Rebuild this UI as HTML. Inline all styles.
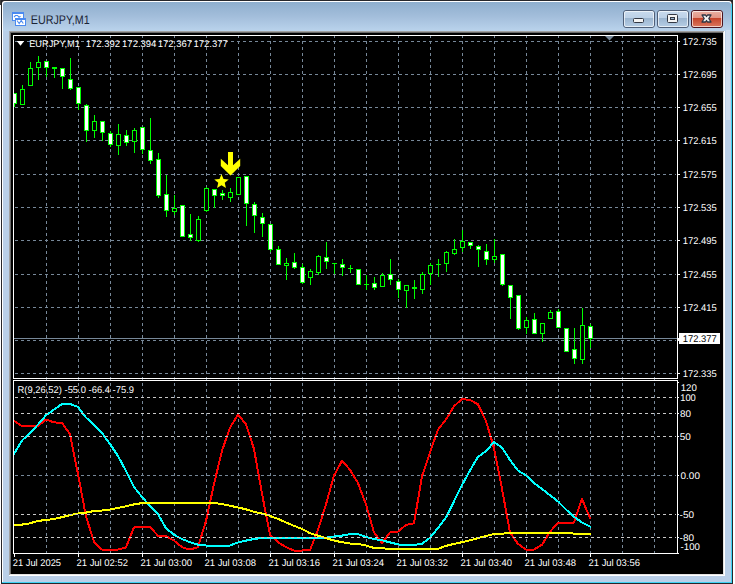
<!DOCTYPE html><html><head><meta charset="utf-8"><style>html,body{margin:0;padding:0;width:735px;height:584px;overflow:hidden;background:#fff}</style></head><body><svg width="735" height="584" viewBox="0 0 735 584" shape-rendering="crispEdges" style="display:block">
<defs><linearGradient id="tb" x1="0" y1="0" x2="0" y2="1"><stop offset="0" stop-color="#8eaecd"/><stop offset="0.5" stop-color="#a3bedb"/><stop offset="1" stop-color="#bad3ec"/></linearGradient><linearGradient id="btn" x1="0" y1="0" x2="0" y2="1"><stop offset="0" stop-color="#c9dbee"/><stop offset="0.44" stop-color="#bcd1e7"/><stop offset="0.45" stop-color="#9bb5d0"/><stop offset="1" stop-color="#b8cfe6"/></linearGradient><linearGradient id="cls" x1="0" y1="0" x2="0" y2="1"><stop offset="0" stop-color="#eab3a6"/><stop offset="0.44" stop-color="#e39484"/><stop offset="0.45" stop-color="#c5432a"/><stop offset="1" stop-color="#dc7a62"/></linearGradient><clipPath id="main"><rect x="14" y="36" width="663" height="342"/></clipPath><clipPath id="ind"><rect x="14" y="381" width="663" height="172"/></clipPath></defs>
<rect x="0" y="0" width="735" height="584" fill="#ffffff"/>
<rect x="0" y="0" width="6" height="5" fill="#3a3a3a"/>
<rect x="727" y="0" width="6" height="5" fill="#3a3a3a"/>
<rect x="1" y="0" width="732" height="584" fill="#26262a"/>
<rect x="2" y="1" width="729.5" height="583" rx="2.5" ry="2.5" fill="#ffffff" shape-rendering="auto"/>
<path d="M731,5 L732,5 L732,583 L2,583 L2,582 L731,582 Z" fill="#3ed2f4"/>
<rect x="731" y="4" width="1" height="579" fill="#3ed2f4"/>
<rect x="2" y="582" width="730" height="1" fill="#3ed2f4"/>
<rect x="1" y="583" width="732" height="1" fill="#26262a"/>
<rect x="732" y="3" width="1" height="581" fill="#26262a"/>
<rect x="3" y="2" width="728" height="580" rx="2.5" ry="2.5" fill="#b9cfe8" shape-rendering="auto"/>
<rect x="3" y="10" width="728" height="572" fill="#b9cfe8"/>
<path d="M3,5.5 Q3,2 6.5,2 L727.5,2 Q731,2 731,5.5 L731,31 L3,31 Z" fill="url(#tb)" shape-rendering="auto"/>
<rect x="726" y="30" width="4" height="90" fill="#dfeaf6" opacity="0.5"/>
<rect x="9" y="31" width="716" height="545" fill="#ffffff"/>
<rect x="9" y="31" width="715" height="544" fill="#a0a0a0"/>
<rect x="10" y="32" width="714" height="543" fill="#e3e3e3"/>
<rect x="10" y="32" width="713" height="542" fill="#696969"/>
<rect x="11" y="33" width="712" height="541" fill="#000000"/>
<g>
<rect x="12" y="12" width="12" height="9" fill="#4a8af0"/>
<rect x="13" y="14" width="10" height="6" fill="#ffffff"/>
<rect x="15" y="18" width="11" height="8" fill="#4a8af0"/>
<rect x="16" y="20" width="9" height="5" fill="#ffffff"/>
<polyline points="14,17 15.5,15.5 17.5,15.5 19,17.2 20.5,16.2" fill="none" stroke="#4a8af0" stroke-width="1.1" shape-rendering="auto"/>
<polyline points="17,20.5 19.2,23.5 21.2,20.5 23.3,23.5" fill="none" stroke="#4a8af0" stroke-width="1.1" shape-rendering="auto"/>
</g>
<text x="30.8" y="24" font-family="Liberation Sans" font-size="12.5" fill="#1b2436" textLength="58.8" lengthAdjust="spacingAndGlyphs" text-rendering="geometricPrecision" shape-rendering="auto">EURJPY,M1</text>
<rect x="623.5" y="10.5" width="31" height="17" rx="2.5" ry="2.5" fill="url(#btn)" stroke="#4f5f78" stroke-width="1" shape-rendering="auto"/>
<rect x="624.5" y="11.5" width="29" height="15" rx="1.5" ry="1.5" fill="none" stroke="#ffffff" stroke-opacity="0.65" stroke-width="1" shape-rendering="auto"/>
<rect x="657.5" y="10.5" width="31" height="17" rx="2.5" ry="2.5" fill="url(#btn)" stroke="#4f5f78" stroke-width="1" shape-rendering="auto"/>
<rect x="658.5" y="11.5" width="29" height="15" rx="1.5" ry="1.5" fill="none" stroke="#ffffff" stroke-opacity="0.65" stroke-width="1" shape-rendering="auto"/>
<rect x="691.5" y="10.5" width="31" height="17" rx="2.5" ry="2.5" fill="url(#cls)" stroke="#4a1420" stroke-width="1" shape-rendering="auto"/>
<rect x="692.5" y="11.5" width="29" height="15" rx="1.5" ry="1.5" fill="none" stroke="#ffffff" stroke-opacity="0.65" stroke-width="1" shape-rendering="auto"/>
<rect x="633.5" y="18.5" width="10" height="4" rx="1" fill="#f4f4f4" stroke="#333844" stroke-width="1" shape-rendering="auto"/>
<rect x="667.5" y="14.5" width="10" height="8" rx="1" fill="#f4f4f4" stroke="#333844" stroke-width="1" shape-rendering="auto"/>
<rect x="670.5" y="17.5" width="4" height="2" fill="#9cb6d0" stroke="#333844" stroke-width="1" shape-rendering="auto"/>
<polygon points="702,15 705.5,15 706.5,16.5 707.5,15 711,15 708.8,18.5 711,22 707.5,22 706.5,20.5 705.5,22 702,22 704.2,18.5" fill="#f2f2f2" stroke="#2e3644" stroke-width="1.3" stroke-linejoin="round" shape-rendering="auto"/>
<line x1="46.5" y1="35" x2="46.5" y2="553" stroke="#778899" stroke-width="1" stroke-dasharray="3 3"/>
<line x1="78.5" y1="35" x2="78.5" y2="553" stroke="#778899" stroke-width="1" stroke-dasharray="3 3"/>
<line x1="110.5" y1="35" x2="110.5" y2="553" stroke="#778899" stroke-width="1" stroke-dasharray="3 3"/>
<line x1="142.5" y1="35" x2="142.5" y2="553" stroke="#778899" stroke-width="1" stroke-dasharray="3 3"/>
<line x1="174.5" y1="35" x2="174.5" y2="553" stroke="#778899" stroke-width="1" stroke-dasharray="3 3"/>
<line x1="206.5" y1="35" x2="206.5" y2="553" stroke="#778899" stroke-width="1" stroke-dasharray="3 3"/>
<line x1="238.5" y1="35" x2="238.5" y2="553" stroke="#778899" stroke-width="1" stroke-dasharray="3 3"/>
<line x1="270.5" y1="35" x2="270.5" y2="553" stroke="#778899" stroke-width="1" stroke-dasharray="3 3"/>
<line x1="302.5" y1="35" x2="302.5" y2="553" stroke="#778899" stroke-width="1" stroke-dasharray="3 3"/>
<line x1="334.5" y1="35" x2="334.5" y2="553" stroke="#778899" stroke-width="1" stroke-dasharray="3 3"/>
<line x1="366.5" y1="35" x2="366.5" y2="553" stroke="#778899" stroke-width="1" stroke-dasharray="3 3"/>
<line x1="398.5" y1="35" x2="398.5" y2="553" stroke="#778899" stroke-width="1" stroke-dasharray="3 3"/>
<line x1="430.5" y1="35" x2="430.5" y2="553" stroke="#778899" stroke-width="1" stroke-dasharray="3 3"/>
<line x1="462.5" y1="35" x2="462.5" y2="553" stroke="#778899" stroke-width="1" stroke-dasharray="3 3"/>
<line x1="494.5" y1="35" x2="494.5" y2="553" stroke="#778899" stroke-width="1" stroke-dasharray="3 3"/>
<line x1="526.5" y1="35" x2="526.5" y2="553" stroke="#778899" stroke-width="1" stroke-dasharray="3 3"/>
<line x1="558.5" y1="35" x2="558.5" y2="553" stroke="#778899" stroke-width="1" stroke-dasharray="3 3"/>
<line x1="590.5" y1="35" x2="590.5" y2="553" stroke="#778899" stroke-width="1" stroke-dasharray="3 3"/>
<line x1="622.5" y1="35" x2="622.5" y2="553" stroke="#778899" stroke-width="1" stroke-dasharray="3 3"/>
<line x1="654.5" y1="35" x2="654.5" y2="553" stroke="#778899" stroke-width="1" stroke-dasharray="3 3"/>
<line x1="15" y1="41.5" x2="676" y2="41.5" stroke="#778899" stroke-width="1" stroke-dasharray="3 3"/>
<line x1="15" y1="74.5" x2="676" y2="74.5" stroke="#778899" stroke-width="1" stroke-dasharray="3 3"/>
<line x1="15" y1="107.5" x2="676" y2="107.5" stroke="#778899" stroke-width="1" stroke-dasharray="3 3"/>
<line x1="15" y1="140.5" x2="676" y2="140.5" stroke="#778899" stroke-width="1" stroke-dasharray="3 3"/>
<line x1="15" y1="174.5" x2="676" y2="174.5" stroke="#778899" stroke-width="1" stroke-dasharray="3 3"/>
<line x1="15" y1="207.5" x2="676" y2="207.5" stroke="#778899" stroke-width="1" stroke-dasharray="3 3"/>
<line x1="15" y1="240.5" x2="676" y2="240.5" stroke="#778899" stroke-width="1" stroke-dasharray="3 3"/>
<line x1="15" y1="274.5" x2="676" y2="274.5" stroke="#778899" stroke-width="1" stroke-dasharray="3 3"/>
<line x1="15" y1="307.5" x2="676" y2="307.5" stroke="#778899" stroke-width="1" stroke-dasharray="3 3"/>
<line x1="15" y1="340.5" x2="676" y2="340.5" stroke="#778899" stroke-width="1" stroke-dasharray="3 3"/>
<line x1="15" y1="373.5" x2="676" y2="373.5" stroke="#778899" stroke-width="1" stroke-dasharray="3 3"/>
<line x1="15" y1="475.5" x2="676" y2="475.5" stroke="#778899" stroke-width="1" stroke-dasharray="3 3"/>
<rect x="13" y="35" width="665" height="1" fill="#ffffff"/>
<rect x="13" y="35" width="1" height="344" fill="#ffffff"/>
<rect x="677" y="35" width="1" height="344" fill="#ffffff"/>
<rect x="13" y="378" width="665" height="1" fill="#ffffff"/>
<rect x="13" y="380" width="665" height="1" fill="#ffffff"/>
<rect x="13" y="380" width="1" height="174" fill="#ffffff"/>
<rect x="677" y="380" width="1" height="174" fill="#ffffff"/>
<rect x="13" y="553" width="665" height="1" fill="#ffffff"/>
<rect x="14" y="338" width="663" height="1" fill="#778899"/>
<polygon points="605,36 614,36 609.5,40.5" fill="#778899" shape-rendering="auto"/>
<g clip-path="url(#main)">
<rect x="14" y="93" width="1" height="14" fill="#00ff00"/>
<rect x="12" y="93" width="5" height="11" fill="#00ff00"/>
<rect x="13" y="94" width="3" height="9" fill="#ffffff"/>
<rect x="22" y="85" width="1" height="20" fill="#00ff00"/>
<rect x="20" y="89" width="5" height="16" fill="#00ff00"/>
<rect x="21" y="90" width="3" height="14" fill="#000000"/>
<rect x="30" y="62" width="1" height="24" fill="#00ff00"/>
<rect x="28" y="68" width="5" height="18" fill="#00ff00"/>
<rect x="29" y="69" width="3" height="16" fill="#000000"/>
<rect x="38" y="56" width="1" height="24" fill="#00ff00"/>
<rect x="36" y="62" width="5" height="6" fill="#00ff00"/>
<rect x="37" y="63" width="3" height="4" fill="#000000"/>
<rect x="46" y="61" width="1" height="16" fill="#00ff00"/>
<rect x="44" y="61" width="5" height="7" fill="#00ff00"/>
<rect x="45" y="62" width="3" height="5" fill="#ffffff"/>
<rect x="54" y="67" width="1" height="11" fill="#00ff00"/>
<rect x="52" y="67" width="5" height="2" fill="#00ff00"/>
<rect x="62" y="68" width="1" height="21" fill="#00ff00"/>
<rect x="60" y="68" width="5" height="9" fill="#00ff00"/>
<rect x="61" y="69" width="3" height="7" fill="#ffffff"/>
<rect x="70" y="58" width="1" height="32" fill="#00ff00"/>
<rect x="68" y="79" width="5" height="10" fill="#00ff00"/>
<rect x="69" y="80" width="3" height="8" fill="#ffffff"/>
<rect x="78" y="87" width="1" height="23" fill="#00ff00"/>
<rect x="76" y="87" width="5" height="17" fill="#00ff00"/>
<rect x="77" y="88" width="3" height="15" fill="#ffffff"/>
<rect x="86" y="104" width="1" height="38" fill="#00ff00"/>
<rect x="84" y="105" width="5" height="26" fill="#00ff00"/>
<rect x="85" y="106" width="3" height="24" fill="#ffffff"/>
<rect x="94" y="115" width="1" height="23" fill="#00ff00"/>
<rect x="92" y="121" width="5" height="10" fill="#00ff00"/>
<rect x="93" y="122" width="3" height="8" fill="#000000"/>
<rect x="102" y="121" width="1" height="20" fill="#00ff00"/>
<rect x="100" y="121" width="5" height="12" fill="#00ff00"/>
<rect x="101" y="122" width="3" height="10" fill="#ffffff"/>
<rect x="110" y="131" width="1" height="16" fill="#00ff00"/>
<rect x="108" y="133" width="5" height="12" fill="#00ff00"/>
<rect x="109" y="134" width="3" height="10" fill="#ffffff"/>
<rect x="118" y="124" width="1" height="31" fill="#00ff00"/>
<rect x="116" y="134" width="5" height="12" fill="#00ff00"/>
<rect x="117" y="135" width="3" height="10" fill="#000000"/>
<rect x="126" y="130" width="1" height="16" fill="#00ff00"/>
<rect x="124" y="135" width="5" height="8" fill="#00ff00"/>
<rect x="125" y="136" width="3" height="6" fill="#ffffff"/>
<rect x="134" y="128" width="1" height="25" fill="#00ff00"/>
<rect x="132" y="130" width="5" height="12" fill="#00ff00"/>
<rect x="133" y="131" width="3" height="10" fill="#000000"/>
<rect x="142" y="127" width="1" height="27" fill="#00ff00"/>
<rect x="140" y="127" width="5" height="23" fill="#00ff00"/>
<rect x="141" y="128" width="3" height="21" fill="#ffffff"/>
<rect x="150" y="118" width="1" height="46" fill="#00ff00"/>
<rect x="148" y="150" width="5" height="11" fill="#00ff00"/>
<rect x="149" y="151" width="3" height="9" fill="#ffffff"/>
<rect x="158" y="153" width="1" height="45" fill="#00ff00"/>
<rect x="156" y="159" width="5" height="37" fill="#00ff00"/>
<rect x="157" y="160" width="3" height="35" fill="#ffffff"/>
<rect x="166" y="175" width="1" height="42" fill="#00ff00"/>
<rect x="164" y="194" width="5" height="17" fill="#00ff00"/>
<rect x="165" y="195" width="3" height="15" fill="#ffffff"/>
<rect x="174" y="195" width="1" height="20" fill="#00ff00"/>
<rect x="172" y="208" width="5" height="4" fill="#00ff00"/>
<rect x="173" y="209" width="3" height="2" fill="#000000"/>
<rect x="182" y="205" width="1" height="32" fill="#00ff00"/>
<rect x="180" y="205" width="5" height="32" fill="#00ff00"/>
<rect x="181" y="206" width="3" height="30" fill="#ffffff"/>
<rect x="190" y="214" width="1" height="27" fill="#00ff00"/>
<rect x="188" y="234" width="5" height="4" fill="#00ff00"/>
<rect x="189" y="235" width="3" height="2" fill="#ffffff"/>
<rect x="198" y="216" width="1" height="26" fill="#00ff00"/>
<rect x="196" y="219" width="5" height="22" fill="#00ff00"/>
<rect x="197" y="220" width="3" height="20" fill="#000000"/>
<rect x="206" y="187" width="1" height="25" fill="#00ff00"/>
<rect x="204" y="188" width="5" height="23" fill="#00ff00"/>
<rect x="205" y="189" width="3" height="21" fill="#000000"/>
<rect x="214" y="189" width="1" height="19" fill="#00ff00"/>
<rect x="212" y="189" width="5" height="7" fill="#00ff00"/>
<rect x="213" y="190" width="3" height="5" fill="#ffffff"/>
<rect x="222" y="190" width="1" height="10" fill="#00ff00"/>
<rect x="220" y="193" width="5" height="3" fill="#00ff00"/>
<rect x="221" y="194" width="3" height="1" fill="#ffffff"/>
<rect x="230" y="188" width="1" height="14" fill="#00ff00"/>
<rect x="228" y="192" width="5" height="6" fill="#00ff00"/>
<rect x="229" y="193" width="3" height="4" fill="#000000"/>
<rect x="238" y="177" width="1" height="18" fill="#00ff00"/>
<rect x="236" y="177" width="5" height="18" fill="#00ff00"/>
<rect x="237" y="178" width="3" height="16" fill="#000000"/>
<rect x="246" y="176" width="1" height="50" fill="#00ff00"/>
<rect x="244" y="176" width="5" height="28" fill="#00ff00"/>
<rect x="245" y="177" width="3" height="26" fill="#ffffff"/>
<rect x="254" y="202" width="1" height="31" fill="#00ff00"/>
<rect x="252" y="204" width="5" height="12" fill="#00ff00"/>
<rect x="253" y="205" width="3" height="10" fill="#ffffff"/>
<rect x="262" y="213" width="1" height="24" fill="#00ff00"/>
<rect x="260" y="217" width="5" height="7" fill="#00ff00"/>
<rect x="261" y="218" width="3" height="5" fill="#ffffff"/>
<rect x="270" y="224" width="1" height="28" fill="#00ff00"/>
<rect x="268" y="224" width="5" height="26" fill="#00ff00"/>
<rect x="269" y="225" width="3" height="24" fill="#ffffff"/>
<rect x="278" y="246" width="1" height="19" fill="#00ff00"/>
<rect x="276" y="249" width="5" height="16" fill="#00ff00"/>
<rect x="277" y="250" width="3" height="14" fill="#ffffff"/>
<rect x="286" y="258" width="1" height="22" fill="#00ff00"/>
<rect x="284" y="263" width="5" height="3" fill="#00ff00"/>
<rect x="285" y="264" width="3" height="1" fill="#000000"/>
<rect x="294" y="253" width="1" height="16" fill="#00ff00"/>
<rect x="292" y="262" width="5" height="6" fill="#00ff00"/>
<rect x="293" y="263" width="3" height="4" fill="#ffffff"/>
<rect x="302" y="264" width="1" height="20" fill="#00ff00"/>
<rect x="300" y="267" width="5" height="16" fill="#00ff00"/>
<rect x="301" y="268" width="3" height="14" fill="#ffffff"/>
<rect x="310" y="269" width="1" height="16" fill="#00ff00"/>
<rect x="308" y="271" width="5" height="7" fill="#00ff00"/>
<rect x="309" y="272" width="3" height="5" fill="#000000"/>
<rect x="318" y="255" width="1" height="20" fill="#00ff00"/>
<rect x="316" y="256" width="5" height="17" fill="#00ff00"/>
<rect x="317" y="257" width="3" height="15" fill="#000000"/>
<rect x="326" y="242" width="1" height="27" fill="#00ff00"/>
<rect x="324" y="257" width="5" height="5" fill="#00ff00"/>
<rect x="325" y="258" width="3" height="3" fill="#ffffff"/>
<rect x="334" y="263" width="1" height="11" fill="#00ff00"/>
<rect x="332" y="263" width="5" height="1" fill="#00ff00"/>
<rect x="342" y="259" width="1" height="17" fill="#00ff00"/>
<rect x="340" y="264" width="5" height="4" fill="#00ff00"/>
<rect x="341" y="265" width="3" height="2" fill="#ffffff"/>
<rect x="350" y="265" width="1" height="8" fill="#00ff00"/>
<rect x="348" y="268" width="5" height="1" fill="#00ff00"/>
<rect x="358" y="269" width="1" height="16" fill="#00ff00"/>
<rect x="356" y="269" width="5" height="16" fill="#00ff00"/>
<rect x="357" y="270" width="3" height="14" fill="#ffffff"/>
<rect x="366" y="275" width="1" height="15" fill="#00ff00"/>
<rect x="364" y="284" width="5" height="1" fill="#00ff00"/>
<rect x="374" y="277" width="1" height="13" fill="#00ff00"/>
<rect x="372" y="283" width="5" height="5" fill="#00ff00"/>
<rect x="373" y="284" width="3" height="3" fill="#ffffff"/>
<rect x="382" y="273" width="1" height="14" fill="#00ff00"/>
<rect x="380" y="275" width="5" height="12" fill="#00ff00"/>
<rect x="381" y="276" width="3" height="10" fill="#000000"/>
<rect x="390" y="259" width="1" height="26" fill="#00ff00"/>
<rect x="388" y="274" width="5" height="6" fill="#00ff00"/>
<rect x="389" y="275" width="3" height="4" fill="#ffffff"/>
<rect x="398" y="279" width="1" height="19" fill="#00ff00"/>
<rect x="396" y="281" width="5" height="9" fill="#00ff00"/>
<rect x="397" y="282" width="3" height="7" fill="#ffffff"/>
<rect x="406" y="285" width="1" height="23" fill="#00ff00"/>
<rect x="404" y="285" width="5" height="6" fill="#00ff00"/>
<rect x="405" y="286" width="3" height="4" fill="#000000"/>
<rect x="414" y="280" width="1" height="19" fill="#00ff00"/>
<rect x="412" y="287" width="5" height="2" fill="#00ff00"/>
<rect x="422" y="272" width="1" height="22" fill="#00ff00"/>
<rect x="420" y="274" width="5" height="16" fill="#00ff00"/>
<rect x="421" y="275" width="3" height="14" fill="#000000"/>
<rect x="430" y="263" width="1" height="22" fill="#00ff00"/>
<rect x="428" y="265" width="5" height="9" fill="#00ff00"/>
<rect x="429" y="266" width="3" height="7" fill="#000000"/>
<rect x="438" y="259" width="1" height="18" fill="#00ff00"/>
<rect x="436" y="264" width="5" height="1" fill="#00ff00"/>
<rect x="446" y="251" width="1" height="21" fill="#00ff00"/>
<rect x="444" y="252" width="5" height="12" fill="#00ff00"/>
<rect x="445" y="253" width="3" height="10" fill="#000000"/>
<rect x="454" y="239" width="1" height="16" fill="#00ff00"/>
<rect x="452" y="249" width="5" height="5" fill="#00ff00"/>
<rect x="453" y="250" width="3" height="3" fill="#000000"/>
<rect x="462" y="230" width="1" height="22" fill="#00ff00"/>
<rect x="460" y="241" width="5" height="7" fill="#00ff00"/>
<rect x="461" y="242" width="3" height="5" fill="#000000"/>
<rect x="470" y="242" width="1" height="7" fill="#00ff00"/>
<rect x="468" y="242" width="5" height="4" fill="#00ff00"/>
<rect x="469" y="243" width="3" height="2" fill="#ffffff"/>
<rect x="478" y="245" width="1" height="22" fill="#00ff00"/>
<rect x="476" y="246" width="5" height="4" fill="#00ff00"/>
<rect x="477" y="247" width="3" height="2" fill="#ffffff"/>
<rect x="486" y="244" width="1" height="21" fill="#00ff00"/>
<rect x="484" y="251" width="5" height="9" fill="#00ff00"/>
<rect x="485" y="252" width="3" height="7" fill="#ffffff"/>
<rect x="494" y="239" width="1" height="24" fill="#00ff00"/>
<rect x="492" y="256" width="5" height="4" fill="#00ff00"/>
<rect x="493" y="257" width="3" height="2" fill="#000000"/>
<rect x="502" y="254" width="1" height="32" fill="#00ff00"/>
<rect x="500" y="254" width="5" height="31" fill="#00ff00"/>
<rect x="501" y="255" width="3" height="29" fill="#ffffff"/>
<rect x="510" y="285" width="1" height="34" fill="#00ff00"/>
<rect x="508" y="285" width="5" height="13" fill="#00ff00"/>
<rect x="509" y="286" width="3" height="11" fill="#ffffff"/>
<rect x="518" y="295" width="1" height="35" fill="#00ff00"/>
<rect x="516" y="295" width="5" height="34" fill="#00ff00"/>
<rect x="517" y="296" width="3" height="32" fill="#ffffff"/>
<rect x="526" y="317" width="1" height="17" fill="#00ff00"/>
<rect x="524" y="320" width="5" height="8" fill="#00ff00"/>
<rect x="525" y="321" width="3" height="6" fill="#000000"/>
<rect x="534" y="313" width="1" height="21" fill="#00ff00"/>
<rect x="532" y="319" width="5" height="15" fill="#00ff00"/>
<rect x="533" y="320" width="3" height="13" fill="#ffffff"/>
<rect x="542" y="323" width="1" height="19" fill="#00ff00"/>
<rect x="540" y="323" width="5" height="11" fill="#00ff00"/>
<rect x="541" y="324" width="3" height="9" fill="#000000"/>
<rect x="550" y="310" width="1" height="9" fill="#00ff00"/>
<rect x="548" y="312" width="5" height="7" fill="#00ff00"/>
<rect x="549" y="313" width="3" height="5" fill="#000000"/>
<rect x="558" y="309" width="1" height="19" fill="#00ff00"/>
<rect x="556" y="311" width="5" height="17" fill="#00ff00"/>
<rect x="557" y="312" width="3" height="15" fill="#ffffff"/>
<rect x="566" y="328" width="1" height="24" fill="#00ff00"/>
<rect x="564" y="328" width="5" height="24" fill="#00ff00"/>
<rect x="565" y="329" width="3" height="22" fill="#ffffff"/>
<rect x="574" y="328" width="1" height="36" fill="#00ff00"/>
<rect x="572" y="349" width="5" height="10" fill="#00ff00"/>
<rect x="573" y="350" width="3" height="8" fill="#ffffff"/>
<rect x="582" y="308" width="1" height="56" fill="#00ff00"/>
<rect x="580" y="325" width="5" height="35" fill="#00ff00"/>
<rect x="581" y="326" width="3" height="33" fill="#000000"/>
<rect x="590" y="324" width="1" height="24" fill="#00ff00"/>
<rect x="588" y="326" width="5" height="13" fill="#00ff00"/>
<rect x="589" y="327" width="3" height="11" fill="#ffffff"/>
</g>
<polygon points="228,152 233,152 233,165.3 240.2,158.7 240.2,166 230.5,175.6 220.8,166 220.8,158.7 228,165.3" fill="#ffff00" shape-rendering="auto"/>
<polygon points="221.50,174.20 223.50,179.05 228.73,179.45 224.73,182.85 225.97,187.95 221.50,185.20 217.03,187.95 218.27,182.85 214.27,179.45 219.50,179.05" fill="#ffff00" shape-rendering="auto"/>
<g clip-path="url(#ind)">
<polyline points="14,421.0 22,426.0 30,426.0 38,426.0 46,419.5 54,422.4 62,422.8 70,434.3 78,474.0 86,516.5 94,541.7 102,549.6 110,549.6 118,549.6 126,547.5 134,527.4 142,527.1 150,527.1 158,535.7 166,536.2 174,540.6 182,547.2 190,549.6 198,547.2 206,520.9 214,484.0 222,450.7 230,427.7 238,414.5 246,424.4 254,449.0 262,493.7 270,534.8 278,542.2 286,547.2 294,550.5 302,550.5 310,550.1 318,529.9 326,504.4 334,475.6 342,460.7 350,469.8 358,483.0 366,504.4 374,532.4 382,543.0 390,532.4 398,531.5 406,525.0 414,523.3 422,476.2 430,452.4 438,429.5 446,419.5 454,406.3 462,398.9 470,400.0 478,404.3 486,421.1 494,448.0 502,488.8 510,532.4 518,543.9 526,549.6 534,549.6 542,544.7 550,531.7 558,523.0 566,523.3 574,522.5 582,499.0 590,518.0" fill="none" stroke="#ff0000" stroke-width="2" stroke-linejoin="round" stroke-linecap="square"/>
<polyline points="14,454.0 22,440.5 30,433.0 38,424.5 46,415.3 54,409.5 62,404.0 70,404.0 78,407.0 86,417.5 94,425.0 102,433.0 110,444.0 118,456.0 126,471.0 134,487.0 142,497.0 150,506.0 158,514.3 166,528.3 174,534.8 182,539.0 190,542.2 198,544.7 206,545.5 214,545.9 222,545.9 230,545.5 238,542.5 246,540.6 254,539.0 262,538.1 270,537.6 278,537.6 286,537.6 294,537.6 302,537.6 310,537.6 318,537.6 326,537.6 334,536.5 342,535.6 350,534.2 358,534.2 366,537.0 374,539.0 382,540.3 390,542.4 398,544.4 406,545.1 414,545.1 422,543.7 430,537.7 438,528.0 446,517.5 454,501.3 462,485.0 470,470.5 478,456.8 486,451.2 494,442.0 502,447.5 510,460.0 518,470.5 526,475.5 534,483.0 542,489.0 550,495.3 558,501.4 566,509.5 574,516.9 582,522.4 590,526.5" fill="none" stroke="#00ffff" stroke-width="2" stroke-linejoin="round" stroke-linecap="square"/>
<polyline points="14,525.0 22,524.6 30,523.3 38,520.9 46,520.0 54,518.9 62,517.2 70,515.1 78,513.5 86,512.6 94,511.0 102,510.5 110,509.5 118,508.0 126,506.3 134,504.4 142,503.1 150,503.1 158,503.1 166,503.1 174,503.1 182,503.1 190,503.1 198,503.1 206,503.1 214,503.1 222,504.0 230,505.7 238,507.5 246,509.3 254,511.8 262,513.5 270,515.9 278,518.9 286,522.5 294,525.8 302,529.0 310,533.2 318,535.7 326,538.1 334,540.6 342,542.2 350,543.5 358,543.9 366,545.5 374,548.0 382,548.3 390,548.8 398,548.8 406,548.8 414,548.8 422,548.8 430,548.8 438,548.8 446,545.9 454,543.9 462,542.2 470,540.3 478,538.1 486,536.0 494,534.0 502,533.7 510,533.0 518,533.0 526,533.0 534,533.0 542,533.0 550,533.0 558,533.0 566,533.0 574,533.6 582,534.0 590,534.0" fill="none" stroke="#ffff00" stroke-width="2" stroke-linejoin="round" stroke-linecap="square"/>
</g>
<line x1="15" y1="397.5" x2="676" y2="397.5" stroke="#c8c8c8" stroke-width="1" stroke-dasharray="3 3"/>
<line x1="15" y1="413.5" x2="676" y2="413.5" stroke="#c8c8c8" stroke-width="1" stroke-dasharray="3 3"/>
<line x1="15" y1="436.5" x2="676" y2="436.5" stroke="#c8c8c8" stroke-width="1" stroke-dasharray="3 3"/>
<line x1="15" y1="514.5" x2="676" y2="514.5" stroke="#c8c8c8" stroke-width="1" stroke-dasharray="3 3"/>
<line x1="15" y1="537.5" x2="676" y2="537.5" stroke="#c8c8c8" stroke-width="1" stroke-dasharray="3 3"/>
<rect x="678" y="41" width="2" height="1" fill="#ffffff"/>
<rect x="678" y="74" width="2" height="1" fill="#ffffff"/>
<rect x="678" y="107" width="2" height="1" fill="#ffffff"/>
<rect x="678" y="140" width="2" height="1" fill="#ffffff"/>
<rect x="678" y="174" width="2" height="1" fill="#ffffff"/>
<rect x="678" y="207" width="2" height="1" fill="#ffffff"/>
<rect x="678" y="240" width="2" height="1" fill="#ffffff"/>
<rect x="678" y="274" width="2" height="1" fill="#ffffff"/>
<rect x="678" y="307" width="2" height="1" fill="#ffffff"/>
<rect x="678" y="340" width="2" height="1" fill="#ffffff"/>
<rect x="678" y="373" width="2" height="1" fill="#ffffff"/>
<rect x="678" y="382" width="1" height="1" fill="#ffffff"/>
<rect x="678" y="397" width="1" height="1" fill="#ffffff"/>
<rect x="678" y="413" width="1" height="1" fill="#ffffff"/>
<rect x="678" y="436" width="1" height="1" fill="#ffffff"/>
<rect x="678" y="475" width="1" height="1" fill="#ffffff"/>
<rect x="678" y="514" width="1" height="1" fill="#ffffff"/>
<rect x="678" y="537" width="1" height="1" fill="#ffffff"/>
<rect x="678" y="553" width="1" height="1" fill="#ffffff"/>
<text x="682.8" y="45" font-family="Liberation Sans" font-size="9.7" text-rendering="geometricPrecision" shape-rendering="auto" fill="#ffffff" textLength="34" lengthAdjust="spacingAndGlyphs">172.735</text>
<text x="682.8" y="78" font-family="Liberation Sans" font-size="9.7" text-rendering="geometricPrecision" shape-rendering="auto" fill="#ffffff" textLength="34" lengthAdjust="spacingAndGlyphs">172.695</text>
<text x="682.8" y="111" font-family="Liberation Sans" font-size="9.7" text-rendering="geometricPrecision" shape-rendering="auto" fill="#ffffff" textLength="34" lengthAdjust="spacingAndGlyphs">172.655</text>
<text x="682.8" y="144" font-family="Liberation Sans" font-size="9.7" text-rendering="geometricPrecision" shape-rendering="auto" fill="#ffffff" textLength="34" lengthAdjust="spacingAndGlyphs">172.615</text>
<text x="682.8" y="178" font-family="Liberation Sans" font-size="9.7" text-rendering="geometricPrecision" shape-rendering="auto" fill="#ffffff" textLength="34" lengthAdjust="spacingAndGlyphs">172.575</text>
<text x="682.8" y="211" font-family="Liberation Sans" font-size="9.7" text-rendering="geometricPrecision" shape-rendering="auto" fill="#ffffff" textLength="34" lengthAdjust="spacingAndGlyphs">172.535</text>
<text x="682.8" y="244" font-family="Liberation Sans" font-size="9.7" text-rendering="geometricPrecision" shape-rendering="auto" fill="#ffffff" textLength="34" lengthAdjust="spacingAndGlyphs">172.495</text>
<text x="682.8" y="278" font-family="Liberation Sans" font-size="9.7" text-rendering="geometricPrecision" shape-rendering="auto" fill="#ffffff" textLength="34" lengthAdjust="spacingAndGlyphs">172.455</text>
<text x="682.8" y="311" font-family="Liberation Sans" font-size="9.7" text-rendering="geometricPrecision" shape-rendering="auto" fill="#ffffff" textLength="34" lengthAdjust="spacingAndGlyphs">172.415</text>
<text x="682.8" y="377" font-family="Liberation Sans" font-size="9.7" text-rendering="geometricPrecision" shape-rendering="auto" fill="#ffffff" textLength="34" lengthAdjust="spacingAndGlyphs">172.335</text>
<rect x="679" y="333" width="41" height="11" fill="#ffffff"/>
<rect x="678" y="338" width="1" height="3" fill="#ffffff"/>
<text x="682.8" y="342" font-family="Liberation Sans" font-size="9.7" text-rendering="geometricPrecision" shape-rendering="auto" fill="#000000" textLength="34" lengthAdjust="spacingAndGlyphs">172.377</text>
<text x="680.7" y="391" font-family="Liberation Sans" font-size="9.7" text-rendering="geometricPrecision" shape-rendering="auto" fill="#ffffff" textLength="16.1" lengthAdjust="spacingAndGlyphs">120</text>
<text x="680.2" y="401" font-family="Liberation Sans" font-size="9.7" text-rendering="geometricPrecision" shape-rendering="auto" fill="#ffffff" textLength="15.6" lengthAdjust="spacingAndGlyphs">100</text>
<text x="679.9" y="417" font-family="Liberation Sans" font-size="9.7" text-rendering="geometricPrecision" shape-rendering="auto" fill="#ffffff" textLength="11" lengthAdjust="spacingAndGlyphs">80</text>
<text x="679.8" y="440" font-family="Liberation Sans" font-size="9.7" text-rendering="geometricPrecision" shape-rendering="auto" fill="#ffffff" textLength="11.1" lengthAdjust="spacingAndGlyphs">50</text>
<text x="680.6" y="479" font-family="Liberation Sans" font-size="9.7" text-rendering="geometricPrecision" shape-rendering="auto" fill="#ffffff" textLength="19.3" lengthAdjust="spacingAndGlyphs">0.00</text>
<text x="679.6" y="518" font-family="Liberation Sans" font-size="9.7" text-rendering="geometricPrecision" shape-rendering="auto" fill="#ffffff" textLength="14.4" lengthAdjust="spacingAndGlyphs">-50</text>
<text x="679.6" y="541" font-family="Liberation Sans" font-size="9.7" text-rendering="geometricPrecision" shape-rendering="auto" fill="#ffffff" textLength="14.4" lengthAdjust="spacingAndGlyphs">-80</text>
<text x="680.6" y="550" font-family="Liberation Sans" font-size="9.7" text-rendering="geometricPrecision" shape-rendering="auto" fill="#ffffff" textLength="19.3" lengthAdjust="spacingAndGlyphs">-100</text>
<polygon points="16.8,41 24.2,41 20.5,45.8" fill="#ffffff" shape-rendering="auto"/>
<text x="29.2" y="47" font-family="Liberation Sans" font-size="9.7" text-rendering="geometricPrecision" shape-rendering="auto" fill="#ffffff" textLength="50.6" lengthAdjust="spacingAndGlyphs">EURJPY,M1</text>
<text x="85.8" y="47" font-family="Liberation Sans" font-size="9.7" text-rendering="geometricPrecision" shape-rendering="auto" fill="#ffffff" textLength="34.3" lengthAdjust="spacingAndGlyphs">172.392</text>
<text x="122.1" y="47" font-family="Liberation Sans" font-size="9.7" text-rendering="geometricPrecision" shape-rendering="auto" fill="#ffffff" textLength="34.3" lengthAdjust="spacingAndGlyphs">172.394</text>
<text x="157.8" y="47" font-family="Liberation Sans" font-size="9.7" text-rendering="geometricPrecision" shape-rendering="auto" fill="#ffffff" textLength="34.3" lengthAdjust="spacingAndGlyphs">172.367</text>
<text x="193.5" y="47" font-family="Liberation Sans" font-size="9.7" text-rendering="geometricPrecision" shape-rendering="auto" fill="#ffffff" textLength="34.3" lengthAdjust="spacingAndGlyphs">172.377</text>
<text x="17.5" y="393" font-family="Liberation Sans" font-size="9.7" text-rendering="geometricPrecision" shape-rendering="auto" fill="#ffffff" textLength="116.5" lengthAdjust="spacingAndGlyphs">R(9,26,52) -55.0 -66.4 -75.9</text>
<rect x="14" y="554" width="1" height="3" fill="#ffffff"/>
<text x="12.8" y="566" font-family="Liberation Sans" font-size="9.7" text-rendering="geometricPrecision" shape-rendering="auto" fill="#ffffff" textLength="48.2" lengthAdjust="spacingAndGlyphs">21 Jul 2025</text>
<rect x="78" y="554" width="1" height="3" fill="#ffffff"/>
<text x="76.5" y="566" font-family="Liberation Sans" font-size="9.7" text-rendering="geometricPrecision" shape-rendering="auto" fill="#ffffff" textLength="51.5" lengthAdjust="spacingAndGlyphs">21 Jul 02:52</text>
<rect x="142" y="554" width="1" height="3" fill="#ffffff"/>
<text x="140.5" y="566" font-family="Liberation Sans" font-size="9.7" text-rendering="geometricPrecision" shape-rendering="auto" fill="#ffffff" textLength="51.5" lengthAdjust="spacingAndGlyphs">21 Jul 03:00</text>
<rect x="206" y="554" width="1" height="3" fill="#ffffff"/>
<text x="204.5" y="566" font-family="Liberation Sans" font-size="9.7" text-rendering="geometricPrecision" shape-rendering="auto" fill="#ffffff" textLength="51.5" lengthAdjust="spacingAndGlyphs">21 Jul 03:08</text>
<rect x="270" y="554" width="1" height="3" fill="#ffffff"/>
<text x="268.5" y="566" font-family="Liberation Sans" font-size="9.7" text-rendering="geometricPrecision" shape-rendering="auto" fill="#ffffff" textLength="51.5" lengthAdjust="spacingAndGlyphs">21 Jul 03:16</text>
<rect x="334" y="554" width="1" height="3" fill="#ffffff"/>
<text x="332.5" y="566" font-family="Liberation Sans" font-size="9.7" text-rendering="geometricPrecision" shape-rendering="auto" fill="#ffffff" textLength="51.5" lengthAdjust="spacingAndGlyphs">21 Jul 03:24</text>
<rect x="398" y="554" width="1" height="3" fill="#ffffff"/>
<text x="396.5" y="566" font-family="Liberation Sans" font-size="9.7" text-rendering="geometricPrecision" shape-rendering="auto" fill="#ffffff" textLength="51.5" lengthAdjust="spacingAndGlyphs">21 Jul 03:32</text>
<rect x="462" y="554" width="1" height="3" fill="#ffffff"/>
<text x="460.5" y="566" font-family="Liberation Sans" font-size="9.7" text-rendering="geometricPrecision" shape-rendering="auto" fill="#ffffff" textLength="51.5" lengthAdjust="spacingAndGlyphs">21 Jul 03:40</text>
<rect x="526" y="554" width="1" height="3" fill="#ffffff"/>
<text x="524.5" y="566" font-family="Liberation Sans" font-size="9.7" text-rendering="geometricPrecision" shape-rendering="auto" fill="#ffffff" textLength="51.5" lengthAdjust="spacingAndGlyphs">21 Jul 03:48</text>
<rect x="590" y="554" width="1" height="3" fill="#ffffff"/>
<text x="588.5" y="566" font-family="Liberation Sans" font-size="9.7" text-rendering="geometricPrecision" shape-rendering="auto" fill="#ffffff" textLength="51.5" lengthAdjust="spacingAndGlyphs">21 Jul 03:56</text>
</svg></body></html>
